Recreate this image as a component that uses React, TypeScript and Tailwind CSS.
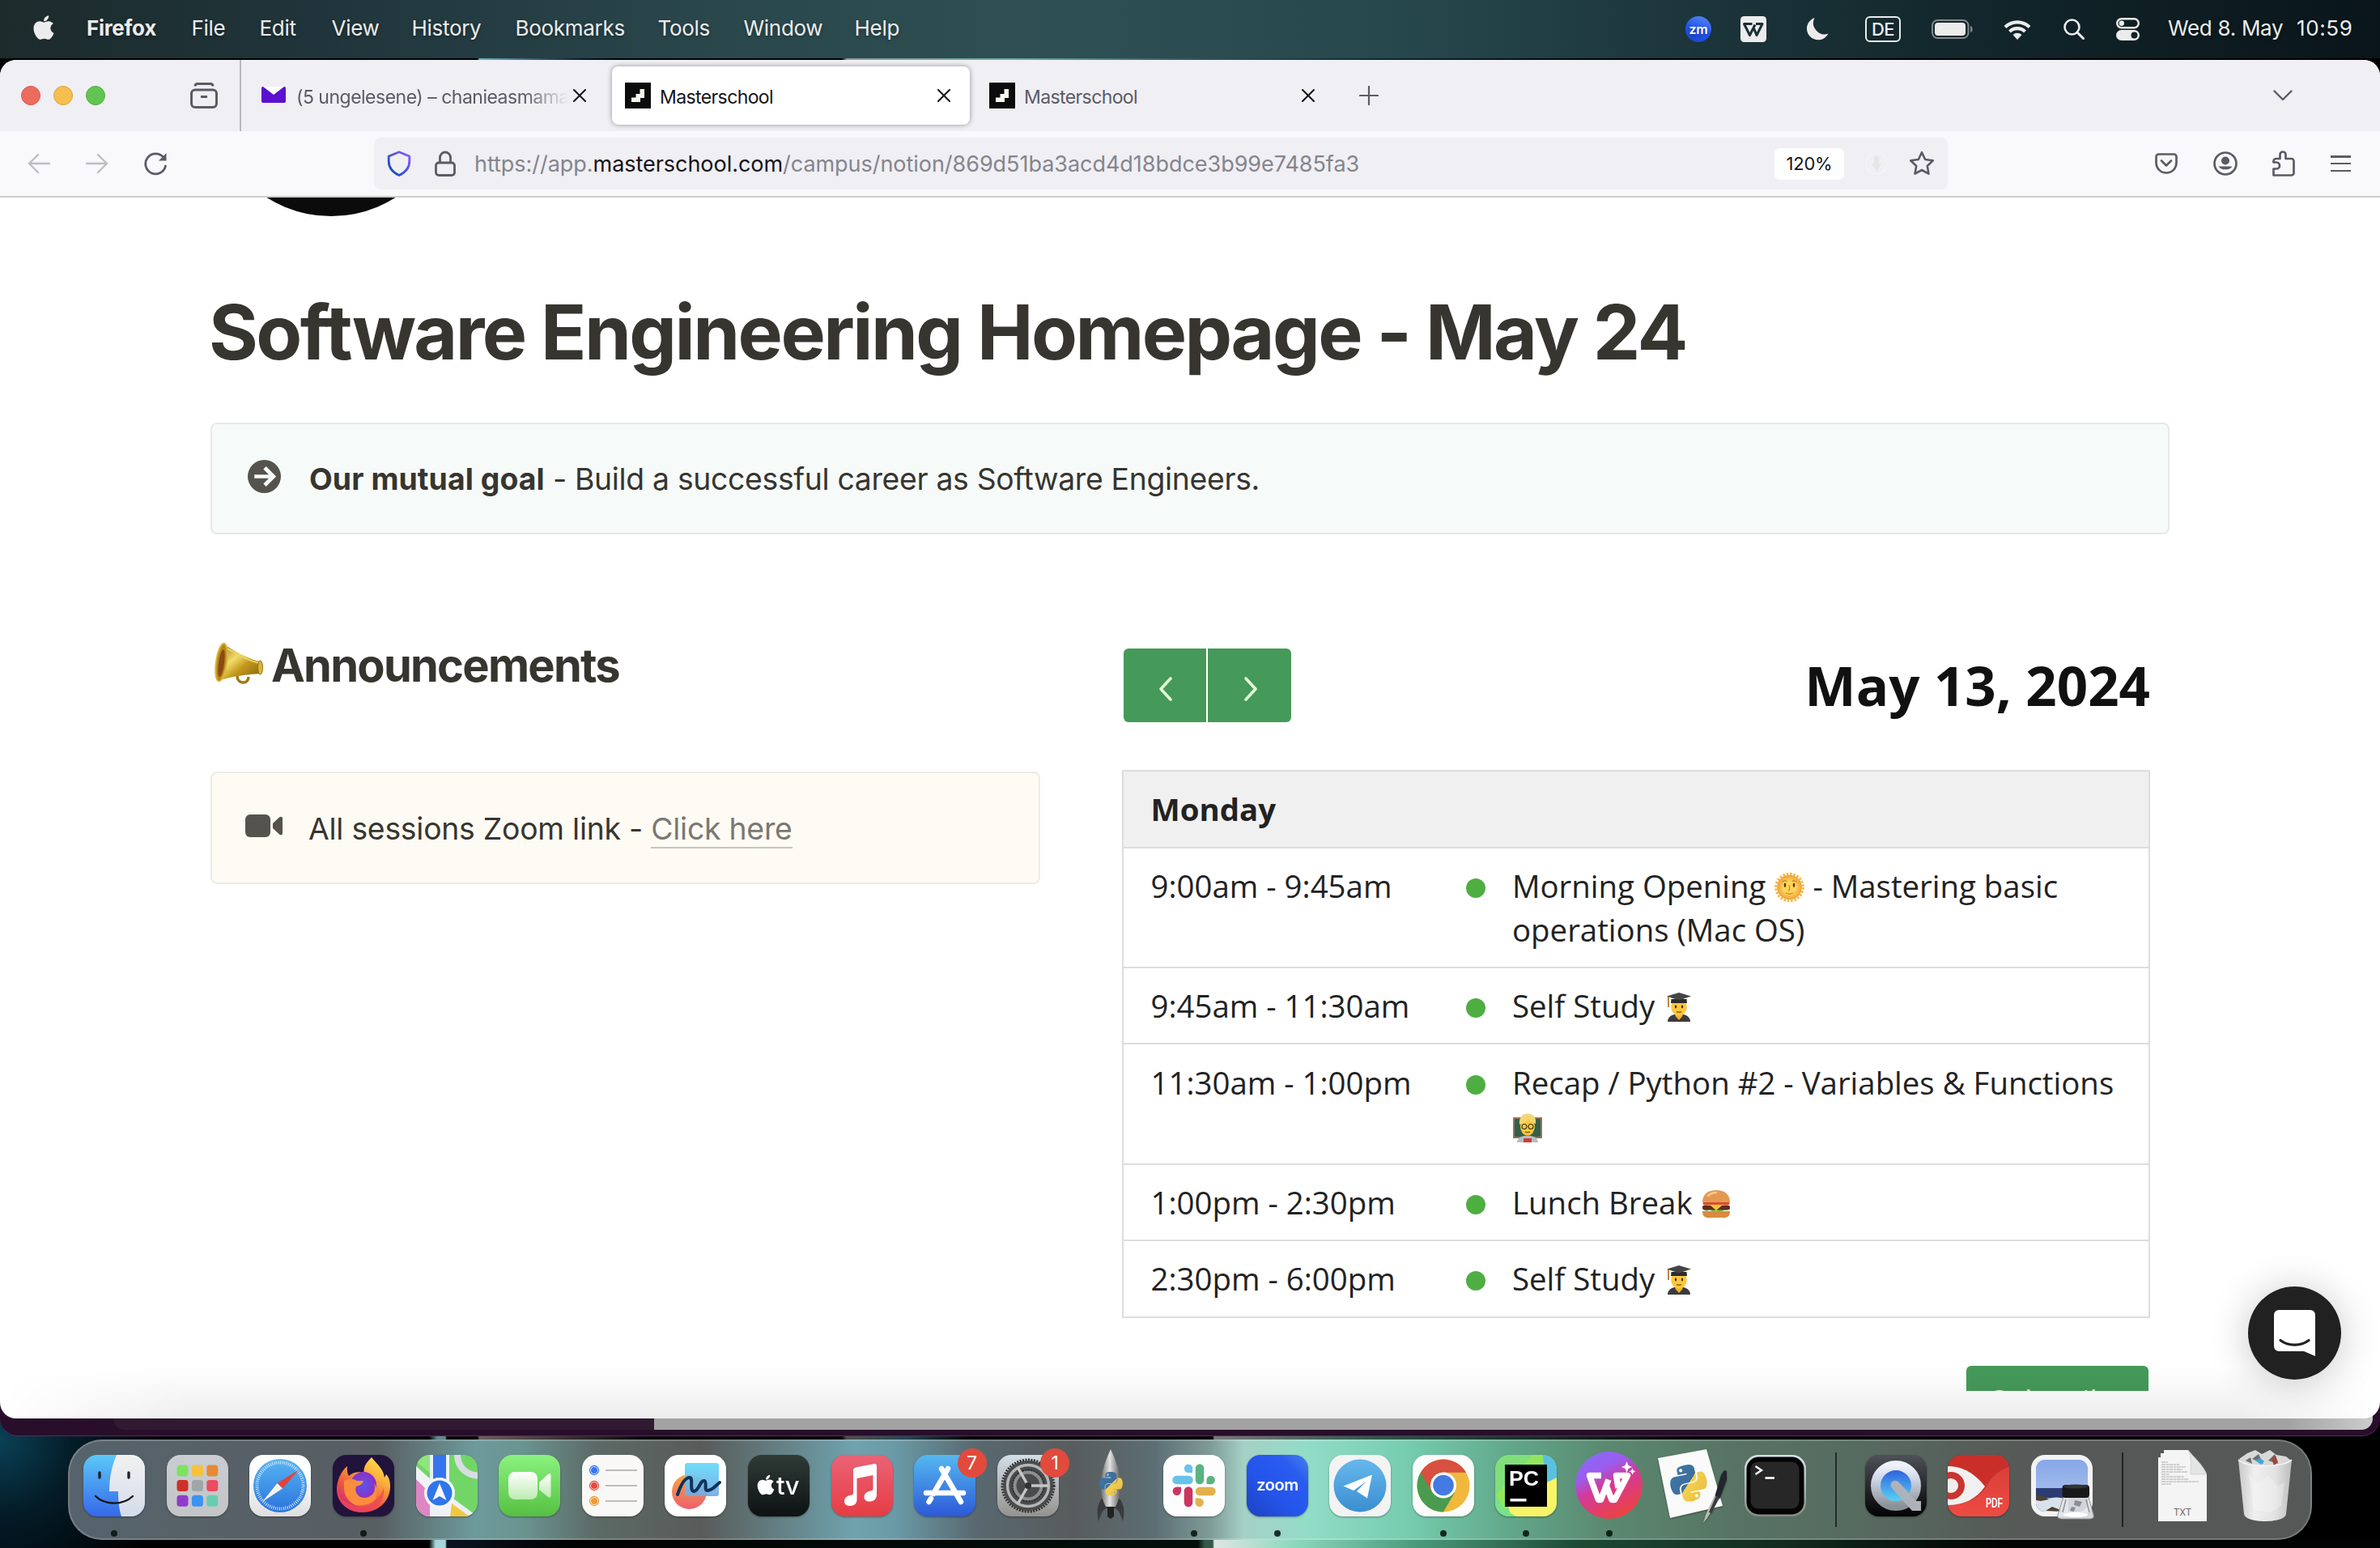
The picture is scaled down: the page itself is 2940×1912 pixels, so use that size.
import React from "react";
import { FaApple, FaPython } from "react-icons/fa";

/* ---------- shared gradients ---------- */
function Defs() {
  return (
    <svg width="0" height="0" className="absolute">
      <defs>
        <linearGradient id="py" x1="0" y1="0" x2="1" y2="1">
          <stop offset="0" stopColor="#3d76a8" />
          <stop offset=".5" stopColor="#3d6f9e" />
          <stop offset=".5" stopColor="#f4d04e" />
          <stop offset="1" stopColor="#e8b93c" />
        </linearGradient>
        <linearGradient id="finder" x1="0" y1="0" x2="0" y2="1">
          <stop offset="0" stopColor="#5cc8f8" />
          <stop offset="1" stopColor="#3568ea" />
        </linearGradient>
        <linearGradient id="finderR" x1="0" y1="0" x2="0" y2="1">
          <stop offset="0" stopColor="#f2f1f1" />
          <stop offset="1" stopColor="#d3dceb" />
        </linearGradient>
        <linearGradient id="ltgray" x1="0" y1="0" x2="0" y2="1">
          <stop offset="0" stopColor="#c9cdd2" />
          <stop offset="1" stopColor="#c3c5c6" />
        </linearGradient>
        <linearGradient id="whiteg" x1="0" y1="0" x2="0" y2="1">
          <stop offset=".3" stopColor="#ffffff" />
          <stop offset="1" stopColor="#dedede" />
        </linearGradient>
        <linearGradient id="compass" x1="0" y1="0" x2="0" y2="1">
          <stop offset="0" stopColor="#57b4f4" />
          <stop offset="1" stopColor="#2a74dc" />
        </linearGradient>
        <linearGradient id="ffbody" x1=".9" y1="0" x2=".3" y2="1">
          <stop offset="0" stopColor="#fdec50" />
          <stop offset=".35" stopColor="#fbae3c" />
          <stop offset=".7" stopColor="#f05440" />
          <stop offset="1" stopColor="#cf2a78" />
        </linearGradient>
        <radialGradient id="fforb">
          <stop offset="0" stopColor="#5b57e8" />
          <stop offset="1" stopColor="#8a2fc8" />
        </radialGradient>
        <linearGradient id="ftime" x1="0" y1="0" x2="0" y2="1">
          <stop offset="0" stopColor="#8af27e" />
          <stop offset="1" stopColor="#56c043" />
        </linearGradient>
        <linearGradient id="cam" x1="0" y1="0" x2="0" y2="1">
          <stop offset="0" stopColor="#ffffff" />
          <stop offset="1" stopColor="#bcebb2" />
        </linearGradient>
        <linearGradient id="ffo" x1="0" y1="0" x2="0" y2="1">
          <stop offset="0" stopColor="#f5a53b" />
          <stop offset="1" stopColor="#ee5f6e" />
        </linearGradient>
        <linearGradient id="ffb" x1="0" y1="0" x2="0" y2="1">
          <stop offset="0" stopColor="#62daf8" />
          <stop offset="1" stopColor="#73a9e4" />
        </linearGradient>
        <linearGradient id="tv" x1="0" y1="0" x2="0" y2="1">
          <stop offset="0" stopColor="#2f3b37" />
          <stop offset="1" stopColor="#0d1213" />
        </linearGradient>
        <linearGradient id="music" x1="0" y1="0" x2="0" y2="1">
          <stop offset="0" stopColor="#ea6376" />
          <stop offset="1" stopColor="#e63c44" />
        </linearGradient>
        <linearGradient id="store" x1="0" y1="0" x2="0" y2="1">
          <stop offset="0" stopColor="#55b8f0" />
          <stop offset="1" stopColor="#2c59d8" />
        </linearGradient>
        <linearGradient id="sett" x1="0" y1="0" x2="0" y2="1">
          <stop offset="0" stopColor="#d3dee6" />
          <stop offset="1" stopColor="#95928f" />
        </linearGradient>
        <linearGradient id="rocket" x1="0" y1="0" x2="1" y2="0">
          <stop offset="0" stopColor="#6d6d6d" />
          <stop offset=".45" stopColor="#e4e4e4" />
          <stop offset="1" stopColor="#5c5c5c" />
        </linearGradient>
        <linearGradient id="zoom" x1="1" y1="0" x2="0" y2="1">
          <stop offset="0" stopColor="#4a80e8" />
          <stop offset=".25" stopColor="#2a5cf0" />
          <stop offset=".6" stopColor="#2454ea" />
          <stop offset="1" stopColor="#1c42c0" />
        </linearGradient>
        <linearGradient id="tele" x1="0" y1="0" x2="0" y2="1">
          <stop offset="0" stopColor="#66b8ec" />
          <stop offset="1" stopColor="#3a8ed0" />
        </linearGradient>
        <linearGradient id="wps" x1=".2" y1="0" x2=".7" y2="1">
          <stop offset="0" stopColor="#8a6bfa" />
          <stop offset=".28" stopColor="#9a5cee" />
          <stop offset=".5" stopColor="#d23a9a" />
          <stop offset="1" stopColor="#f0423a" />
        </linearGradient>
        <linearGradient id="term" x1="0" y1="0" x2="0" y2="1">
          <stop offset="0" stopColor="#d3e2ea" />
          <stop offset="1" stopColor="#8a8684" />
        </linearGradient>
        <linearGradient id="qt" x1="0" y1="0" x2="0" y2="1">
          <stop offset="0" stopColor="#4e5158" />
          <stop offset="1" stopColor="#030303" />
        </linearGradient>
        <linearGradient id="qring" x1="0" y1="0" x2="0" y2="1">
          <stop offset="0" stopColor="#eef2fc" />
          <stop offset=".35" stopColor="#cdd5e6" />
          <stop offset="1" stopColor="#8b9198" />
        </linearGradient>
        <linearGradient id="qin" x1="0" y1="0" x2="0" y2="1">
          <stop offset="0" stopColor="#2a50d8" />
          <stop offset="1" stopColor="#5ee4fa" />
        </linearGradient>
        <linearGradient id="pdf" x1="0" y1="0" x2="0" y2="1">
          <stop offset="0" stopColor="#d8403a" />
          <stop offset="1" stopColor="#ee4a42" />
        </linearGradient>
        <linearGradient id="sky" x1="0" y1="0" x2="0" y2="1">
          <stop offset="0" stopColor="#86a8e8" />
          <stop offset="1" stopColor="#b3c8ef" />
        </linearGradient>
        <linearGradient id="trash" x1="0" y1="0" x2="1" y2="0">
          <stop offset="0" stopColor="#c9c9c9" />
          <stop offset=".3" stopColor="#efefef" />
          <stop offset=".7" stopColor="#e2e2e2" />
          <stop offset="1" stopColor="#bdbdbd" />
        </linearGradient>
        <linearGradient id="brass" x1="0" y1="0" x2="1" y2="1">
          <stop offset="0" stopColor="#8a6a10" />
          <stop offset=".4" stopColor="#f2dc6a" />
          <stop offset=".6" stopColor="#c49a1e" />
          <stop offset="1" stopColor="#7a5c0c" />
        </linearGradient>
        <linearGradient id="shield" x1="1" y1="0" x2="0" y2="1">
          <stop offset="0" stopColor="#9059ff" />
          <stop offset="1" stopColor="#0250bb" />
        </linearGradient>
        <radialGradient id="sun">
          <stop offset=".5" stopColor="#fdd458" />
          <stop offset="1" stopColor="#ee9f3c" />
        </radialGradient>
        <clipPath id="tile">
          <rect width="76" height="76" rx="17" />
        </clipPath>
      </defs>
    </svg>
  );
}

function Tile({ fill, children }: { fill: string; children?: React.ReactNode }) {
  return (
    <svg viewBox="0 0 76 76" className="size-[76px] overflow-visible drop-shadow-[0_1px_1px_rgba(0,0,0,0.35)]">
      <g clipPath="url(#tile)">
        <rect width="76" height="76" fill={fill} />
        {children}
      </g>
    </svg>
  );
}

/* ---------- dock icons ---------- */
const Finder = () => (
  <Tile fill="url(#finder)">
    <path d="M41 0C35 14 32 28 32 45h11c0 12 1 22 4 31h29V0z" fill="url(#finderR)" />
    <path d="M20 22v6M56 22v6" stroke="#222" strokeWidth="3.400" strokeLinecap="round" />
    <path d="M15 51c12 11.500 34 11.500 46 0" stroke="#151515" strokeWidth="2.400" fill="none" strokeLinecap="round" />
  </Tile>
);
const padColors = ["#7de35e", "#f6c23d", "#e68a35", "#cc3128", "#a0a5a8", "#ea4c60", "#8f3ccb", "#3c93f2", "#6accae"];
const Launchpad = () => (
  <Tile fill="url(#ltgray)">
    {padColors.map((c, i) => (
      <rect key={c} x={12.5 + (i % 3) * 18.4} y={12.5 + Math.floor(i / 3) * 18.6} width="14" height="14" rx="3.500" fill={c} />
    ))}
  </Tile>
);
const Safari = () => (
  <Tile fill="url(#whiteg)">
    <circle cx="38" cy="38" r="33" fill="url(#compass)" />
    <circle cx="38" cy="38" r="28.500" fill="none" stroke="#fff" strokeWidth="4" strokeDasharray="0.900 1.587" opacity=".85" />
    <path d="M61.500 18L41 41.500 34.500 35z" fill="#e0443c" />
    <path d="M16 58l18.500-23 6.500 6.500z" fill="#f6f4f2" />
  </Tile>
);
const FirefoxIcon = () => (
  <Tile fill="#21133b">
    <path d="M48 3c-6 6-10 11-9.500 19C31 20 24 22 20 26c-2-3-2.500-7-2-12-8 6-13 18-13 29 0 16 14 28 32 28s34-13 34-32c0-8-2-12-5-15l-2 4C62 16 55 12 48 3z" fill="url(#ffbody)" />
    <circle cx="38" cy="37" r="16" fill="url(#fforb)" />
    <path d="M14 32c5-3 12-3 16 0l8 0c-1 4-5 6-9 7-3 8 4 15 12 14 9-1 13-9 10-18 6 8 5 22-6 27-15 6-30-5-31-20z" fill="#fb8d3c" />
    <path d="M6 48c7 12 22 17 36 13 11-3 18-11 21-20 2 16-10 30-27 30C21 71 9 62 6 48z" fill="#ee4a55" opacity=".75" />
  </Tile>
);
const Maps = () => (
  <Tile fill="#72d667">
    <path d="M0 0h26v30L0 8z" fill="#8fe57c" />
    <path d="M0 20l76 56H40L0 46z" fill="#eceef2" />
    <path d="M0 14l56 50-8 12H0z" fill="#f1f2f6" />
    <path d="M0 30l18 18v28H0z" fill="#dd86c4" />
    <path d="M44 60l22 16H42z" fill="#f2c83f" />
    <path d="M17 0h24v76H17z" fill="#eef0f5" />
    <path d="M21 0h16v40H21z" fill="#3574ee" />
    <path d="M51 0c0 14 10 25 27 26" stroke="#d9dde2" strokeWidth="8" fill="none" />
    <circle cx="29" cy="47" r="19" fill="#f3f5f8" />
    <circle cx="29" cy="47" r="15.500" fill="#2f76ea" />
    <path d="M29 35l8.500 21-8.500-5-8.500 5z" fill="#f6f6f6" />
  </Tile>
);
const FaceTime = () => (
  <Tile fill="url(#ftime)">
    <rect x="12" y="21" width="36" height="34" rx="8" fill="url(#cam)" />
    <path d="M50 34l11-10c2-1.500 3.500-.5 3.500 1.500v25c0 2-1.500 3-3.500 1.500l-11-9z" fill="url(#cam)" />
  </Tile>
);
const Reminders = () => (
  <Tile fill="#f9f8f7">
    {["#3576ec", "#e64a40", "#ee9a38"].map((c, i) => (
      <g key={c}>
        <circle cx="15" cy={19 + i * 19} r="5.500" fill="none" stroke={c} strokeWidth="1.300" />
        <circle cx="15" cy={19 + i * 19} r="4" fill={c} />
        <path d={`M29 ${19 + i * 19}h39`} stroke="#bdbcbc" strokeWidth="1.800" />
      </g>
    ))}
  </Tile>
);
const Freeform = () => (
  <Tile fill="#ffffff">
    <circle cx="30.500" cy="45.500" r="21.500" fill="url(#ffo)" />
    <rect x="25" y="10" width="42" height="41" rx="3" fill="url(#ffb)" opacity=".92" />
    <path d="M16 49c4-12 9-21 15-21 5 0-1 16 5 17 6 0 8-14 13-13 4 1-1 12 4 12 6 0 10-6 15-10" stroke="#10325c" strokeWidth="4" fill="none" strokeLinecap="round" />
  </Tile>
);
const AppleTV = () => (
  <Tile fill="url(#tv)">
    <FaApple x={8} y={23} size={28} fill="#fff" />
    <text x="35" y="49" fontFamily="Inter" fontSize="31" fontWeight="500" letterSpacing="-.5" fill="#fff">tv</text>
  </Tile>
);
const Music = () => (
  <Tile fill="url(#music)">
    <path d="M27 20c0-3 1-4 4-4.800l21-4c3-.6 4 .5 4 3.300V49c0 5-3 8-8 8.500-4 .4-7.500-1.500-7.500-5.500 0-5 4-6.800 8-7.600 2.500-.5 3-1 3-3V25l-20 4v26c0 5-3 7.800-8 8-4.500.2-7.500-2-7.500-5.500 0-5 4-7 8-7.700 2.500-.5 3-1 3-3z" fill="#fff" />
  </Tile>
);
const AppStore = () => (
  <Tile fill="url(#store)">
    <g stroke="#fff" strokeWidth="6.500" strokeLinecap="round">
      <path d="M42 17L24 48M34 17l24 41M15 47h46M21 54l-2.500 4" />
    </g>
  </Tile>
);
const Settings = () => (
  <Tile fill="url(#sett)">
    <circle cx="38" cy="38" r="31" fill="#4a4b4d" />
    <circle cx="38" cy="38" r="32" fill="none" stroke="#2e2f31" strokeWidth="3" strokeDasharray="2 1.500" />
    <circle cx="38" cy="38" r="25.500" fill="none" stroke="#b5b6b8" strokeWidth="3.500" />
    <circle cx="38" cy="38" r="16.500" fill="none" stroke="#8d8e90" strokeWidth="4" />
    <circle cx="38" cy="38" r="19.500" fill="none" stroke="#2e2f31" strokeWidth="2" strokeDasharray="2 1.500" />
    <path d="M38 38h25M38 38L25.500 16M38 38L25.500 60" stroke="#c5c6c8" strokeWidth="3.500" />
    <circle cx="38" cy="38" r="4" fill="#303133" />
  </Tile>
);
const Rocket = () => (
  <svg viewBox="0 0 40 92" className="h-[92px] w-[40px]">
    <path d="M9 62C4 68 2 78 5 90c3-8 4-13 9-16h12c5 3 6 8 9 16 3-12 1-22-4-28z" fill="#3b3b3d" />
    <path d="M20 1C11 20 7 36 8 50c.500 10 3 16 6 22h12c3-6 5.500-12 6-22 1-14-3-30-12-49z" fill="url(#rocket)" />
    <path d="M16 72h8v12l-4 3-4-3z" fill="#222" />
    <FaPython x={4} y={27} size={33} fill="url(#py)" />
  </svg>
);
const SlackIcon = () => (
  <Tile fill="#fdfdfd">
    <g strokeLinecap="round" strokeWidth="10.500">
      <path d="M45 16.500v14.500" stroke="#5bb384" />
      <path d="M16.500 31h15" stroke="#68c3ec" />
      <path d="M31 44.500V59" stroke="#cc3560" />
      <path d="M45 45h14.500" stroke="#e2b24a" />
    </g>
    <path d="M36 22h-5a5.200 5.200 0 1 1 5.200-5.200z" fill="#68c3ec" />
    <path d="M53.500 36v-5a5.200 5.200 0 1 1 5.200 5.200z" fill="#5bb384" />
    <path d="M39.700 53.500h5a5.200 5.200 0 1 1-5.200 5.200z" fill="#e2b24a" />
    <path d="M22 39.700v5a5.200 5.200 0 1 1-5.200-5.200z" fill="#cc3560" />
  </Tile>
);
const ZoomIcon = () => (
  <Tile fill="url(#zoom)">
    <text x="38" y="43.500" textAnchor="middle" fontFamily="Inter" fontSize="20" fontWeight="600" letterSpacing="-.5" fill="#fff">zoom</text>
  </Tile>
);
const TelegramIcon = () => (
  <Tile fill="#f3f3f3">
    <circle cx="38" cy="38" r="32.500" fill="url(#tele)" />
    <path d="M17.500 38.500L53 24.500l-6 29-13-8.500 12-12.500-16 11.500z" fill="#fff" />
  </Tile>
);
const ChromeIcon = () => (
  <Tile fill="#fbfcfb">
    <circle cx="38" cy="38" r="32.500" fill="#f2b83e" />
    <path d="M38 38L9.900 21.700A32.500 32.500 0 0 0 38 70.500l14-24z" fill="#4a9b50" />
    <path d="M9.900 21.700A32.500 32.500 0 0 1 66.100 21.700H38L24 46z" fill="#d8503f" />
    <circle cx="38" cy="37.500" r="16" fill="#fff" />
    <circle cx="38" cy="37.500" r="12.800" fill="#447be2" />
  </Tile>
);
const PyCharm = () => (
  <Tile fill="#7fe07a">
    <path d="M59 0h17v30L62 34z" fill="#5ac0e0" />
    <path d="M0 50L46 0h12l6 40H30L6 76H0z" fill="#92e65e" />
    <path d="M76 28v48H20l-4-12 48-30z" fill="#f8f468" />
    <path d="M0 48l12 20 14 8H0z" fill="#79e28a" />
    <rect x="12" y="12" width="52" height="52" fill="#000" />
    <rect x="18.500" y="54" width="20" height="3.500" fill="#fff" />
    <text x="17" y="37.500" fontFamily="Liberation Sans" fontWeight="700" fontSize="26" textLength="37" lengthAdjust="spacingAndGlyphs" fill="#fff">PC</text>
  </Tile>
);
const Wps = () => (
  <svg viewBox="0 0 83 83" className="size-[83px]">
    <circle cx="41.500" cy="41.500" r="41.500" fill="url(#wps)" />
    <path d="M32 29.500H17.500L28.500 59.500h3L41 34.500M37.500 40L45 59.500h3.500L64.500 29.500H50.500L53 45" fill="none" stroke="#fff" strokeWidth="7.500" strokeLinejoin="round" />
    <path d="M63.500 12l2 5 4.500 2-4.500 2-2 5-2-5-4.500-2 4.500-2zM70.500 20.500l1.300 2.800 2.700 1.200-2.700 1.200L70.500 28.500l-1.300-2.800-2.700-1.200 2.700-1.200z" fill="#fff" />
  </svg>
);
const Idle = () => (
  <svg viewBox="0 0 86 92" className="h-[92px] w-[86px] overflow-visible drop-shadow-[0_1px_1px_rgba(0,0,0,0.4)]">
    <path d="M0 12L60 1l20 70L15 86z" fill="#fafafa" />
    <g transform="rotate(-12 38 43)">
      <FaPython x={12} y={17} size={52} fill="url(#py)" />
    </g>
    <path d="M85 28l-3-1-4 6-8 27 6 3 9-24z" fill="#23262e" />
    <path d="M70 58l-11 24-3 10 5-6 15-24z" fill="#b9bbb0" />
    <path d="M72 58l-9 21 3 1 10-19z" fill="#3a3d42" />
  </svg>
);
const Terminal = () => (
  <svg viewBox="0 0 76 76" className="size-[76px]">
    <rect width="76" height="76" rx="17" fill="url(#term)" />
    <rect x="2.500" y="2.500" width="71" height="71" rx="15" fill="#040404" />
    <rect x="7.500" y="8.500" width="60" height="58" rx="9" fill="#272727" />
    <path d="M13.500 14l7.500 5-7.500 5" fill="none" stroke="#fff" strokeWidth="2.400" />
    <path d="M25.500 28.500H37" stroke="#fff" strokeWidth="2.600" />
  </svg>
);
const QuickTime = () => (
  <Tile fill="url(#qt)">
    <circle cx="38" cy="38" r="25" fill="url(#qin)" stroke="url(#qring)" strokeWidth="12" />
    <path d="M33 41c-5-6 3-13 9-7l21 23h6v12H58z" fill="#aeb3ba" />
  </Tile>
);
const PdfIcon = () => (
  <Tile fill="#c92f28">
    <path d="M76 15C60 20 54 28 47 40 38 54 20 62 0 62v14h76z" fill="url(#pdf)" />
    <path d="M0 14c20 0 34 10 46 25C36 54 20 62 0 62z" fill="#f1f0f0" />
    <circle cx="4" cy="38" r="17" fill="#c8352f" />
    <circle cx="4" cy="38" r="9" fill="#f3eeee" />
    <text x="47" y="65" fontFamily="Liberation Sans" fontWeight="700" fontSize="16.500" textLength="21" lengthAdjust="spacingAndGlyphs" fill="#fff">PDF</text>
  </Tile>
);
const PreviewIcon = () => (
  <svg viewBox="0 0 78 80" className="ml-[2px] mt-[4px] h-[80px] w-[78px] overflow-visible">
    <rect width="76" height="76" rx="17" fill="#f3f3f3" />
    <rect x="6" y="6" width="64" height="64" rx="11" fill="url(#sky)" />
    <path d="M6 41h64v18a11 11 0 0 1-11 11H17A11 11 0 0 1 6 59z" fill="#2c3d74" />
    <path d="M6 53c8-3 14 2 20 0 8-2 14 2 20 0v17H17A11 11 0 0 1 6 59z" fill="#d9e2ea" />
    <path d="M6 49l10 2 6 4-10 2-6-1zM18 69l8-5 8 3 6 3z" fill="#4d4136" />
    <path d="M40 52L33 74c-1 4 2 5 6 5h32c5 0 7-1 6-5l-6-22z" fill="#e4e6e8" fillOpacity=".9" stroke="#8e9297" />
    <path d="M43 55l-4 16M68 55l4 16" stroke="#90959a" strokeWidth="1.500" />
    <path d="M54 56l9 2-3 6-7-2zM50 64l5 1-2 5-5-1z" fill="#8a8f96" />
    <ellipse cx="55" cy="74" rx="15" ry="3" fill="#fff" />
    <rect x="38.500" y="37" width="33.500" height="16" rx="4" fill="#19191a" />
    <ellipse cx="55" cy="39" rx="15" ry="2.500" fill="#333435" />
  </svg>
);
const TxtFile = () => (
  <svg viewBox="0 0 60 90" className="h-[90px] w-[60px]">
    <path d="M7 1h30l23 30v58H0V10h3V5h4z" fill="#f4f4f4" />
    <path d="M37 1c5 8 3 20 3 30h20C56 20 44 10 37 1z" fill="#e4e4e4" stroke="#c2c2c2" strokeWidth=".6" />
    <path d="M4 16h8M4 19h22M4 22h30M4 25h26M4 28h32M4 31h10M4 34h28M4 37h34M4 40h46M4 43h12" stroke="#a0a0a0" strokeWidth=".9" strokeDasharray="5 .8 3 .6" />
    <text x="30" y="82" textAnchor="middle" fontFamily="Inter" fontSize="11.500" fill="#6b6b6b">TXT</text>
  </svg>
);
const Trash = () => (
  <svg viewBox="0 0 68 90" className="h-[90px] w-[68px]">
    <path d="M2 12l10-7 10-4 8 5 10-5 8 6 12 2 6 5-8 10-24 4-24-5z" fill="#d9d9d9" />
    <path d="M18 12l8-6 6 12zM38 14l8-8 4 12zM10 14l6-4 2 8z" fill="#6b6f74" />
    <path d="M22 14l6-3 5 4-4 4z" fill="#3ba7d8" />
    <path d="M42 11l5-3 3 8-5 4z" fill="#a0453a" />
    <path d="M1 13c8 10 58 10 66 0l-7 67c-1 12-51 12-52 0z" fill="url(#trash)" />
    <path d="M14 30l10 12 14-10 12 14 8-6-4 30-14 8-20-2z" fill="#fff" opacity=".25" />
    <path d="M1 13c8 10 58 10 66 0" fill="none" stroke="#f6f6f6" strokeWidth="1.500" />
  </svg>
);

type DockItem = { name: string; icon: React.ReactNode; running?: boolean; badge?: string };
const apps: DockItem[] = [
  { name: "Finder", icon: <Finder />, running: true },
  { name: "Launchpad", icon: <Launchpad /> },
  { name: "Safari", icon: <Safari /> },
  { name: "Firefox", icon: <FirefoxIcon />, running: true },
  { name: "Maps", icon: <Maps /> },
  { name: "FaceTime", icon: <FaceTime /> },
  { name: "Reminders", icon: <Reminders /> },
  { name: "Freeform", icon: <Freeform /> },
  { name: "TV", icon: <AppleTV /> },
  { name: "Music", icon: <Music /> },
  { name: "App Store", icon: <AppStore />, badge: "7" },
  { name: "Settings", icon: <Settings />, badge: "1" },
  { name: "Python Launcher", icon: <Rocket /> },
  { name: "Slack", icon: <SlackIcon />, running: true },
  { name: "Zoom", icon: <ZoomIcon />, running: true },
  { name: "Telegram", icon: <TelegramIcon /> },
  { name: "Chrome", icon: <ChromeIcon />, running: true },
  { name: "PyCharm", icon: <PyCharm />, running: true },
  { name: "WPS", icon: <Wps />, running: true },
  { name: "IDLE", icon: <Idle /> },
  { name: "Terminal", icon: <Terminal /> },
];
const recents: DockItem[] = [
  { name: "QuickTime", icon: <QuickTime /> },
  { name: "PDF", icon: <PdfIcon /> },
  { name: "Preview", icon: <PreviewIcon /> },
];
const files: DockItem[] = [
  { name: "Text", icon: <TxtFile /> },
  { name: "Trash", icon: <Trash /> },
];

function DockSlot({ item }: { item: DockItem }) {
  return (
    <div className="relative flex h-full w-[102.600px] shrink-0 items-center justify-center pb-[11px]" title={item.name}>
      {item.icon}
      {item.badge && (
        <span className="absolute right-0 top-[9px] flex size-[36px] items-center justify-center rounded-full bg-[#e04b3d] font-['Inter'] text-[23px] text-white">
          {item.badge}
        </span>
      )}
      {item.running && <span className="absolute bottom-[2px] size-[8px] rounded-full bg-[#04100c]/85" />}
    </div>
  );
}

const Sep = () => (
  <div className="flex h-full w-[46px] shrink-0 justify-center pl-[1px]">
    <div className="mt-[14px] h-[92px] w-[2px] bg-black/60" />
  </div>
);

function Dock() {
  return (
    <div className="relative ml-[84px] mt-[26px] flex h-[124px] w-[2772px] rounded-[42px] border-2 border-white/20 bg-[linear-gradient(90deg,#56636c_0px,#585e62_380px,#6d9a9b_500px,#6a9490_560px,#5c6a66_650px,#585b59_780px,#6fa3ae_970px,#6a9aa6_1020px,#586870_1120px,#585c5c_1240px,#5c6e74_1340px,#7f9c98_1410px,#a5d0c6_1450px,#92dcc6_1530px,#76cdb0_1650px,#62a78a_1780px,#5a8870_1900px,#577363_2060px,#566a60_2220px,#565c58_2370px,#565857_2450px)] pl-[4px]">
      {apps.map((a) => (
        <DockSlot key={a.name} item={a} />
      ))}
      <Sep />
      {recents.map((a) => (
        <DockSlot key={a.name} item={a} />
      ))}
      <Sep />
      {files.map((a) => (
        <DockSlot key={a.name} item={a} />
      ))}
    </div>
  );
}

/* ---------- menu bar ---------- */
function MenuBar() {
  return (
    <div className="relative flex h-[72px] items-center bg-[linear-gradient(90deg,#1c2b2c_0px,#20353b_400px,#2a484c_900px,#2e4f53_1300px,#27494e_1700px,#1c363b_2080px,#12262b_2440px,#09151a_2940px)] font-['Inter'] text-[26px] tracking-[-0.3px] text-[#ececec] [text-shadow:0_2px_4px_rgba(0,0,0,0.35)]">
      <div className="-mt-[3px] flex items-center">
        <div className="w-[107px] pl-[37px]">
          <FaApple size={34} className="-mt-[2px]" />
        </div>
        <div className="w-[129.500px] font-bold">Firefox</div>
        <div className="w-[84px]">File</div>
        <div className="w-[89px]">Edit</div>
        <div className="w-[99px]">View</div>
        <div className="w-[128px]">History</div>
        <div className="w-[176px]">Bookmarks</div>
        <div className="w-[106px]">Tools</div>
        <div className="w-[137px]">Window</div>
        <div className="w-[90px]">Help</div>
      </div>
      <div className="ml-auto flex items-center pr-[33px]">
        <div className="flex size-[32px] items-center justify-center rounded-full bg-[linear-gradient(200deg,#5b8cf4,#2456ee_50%,#1c45c8)] text-[16px] font-semibold tracking-[-0.3px] text-white">zm</div>
        <svg viewBox="0 0 32 32" className="ml-[36px] size-[32px]">
          <rect width="32" height="32" rx="4.500" fill="#ececec" />
          <path d="M14.500 9.500H4.500L11.500 23.500l6.500-13M16.500 15L20 23.500 27 9.500H19" fill="none" stroke="#1a3035" strokeWidth="3" strokeLinejoin="round" />
        </svg>
        <svg viewBox="0 0 28 28" className="ml-[49px] size-[28px]">
          <path d="M10.500 0A14 14 0 0 0 27.500 19.500 14 14 0 1 1 10.500 0z" fill="#ececec" />
        </svg>
        <div className="ml-[45px] flex h-[32px] w-[44px] items-center justify-center rounded-[6px] border-[2px] border-[#ececec] text-[22px] font-medium tracking-[-0.5px]">DE</div>
        <svg viewBox="0 0 52 24" className="ml-[38px] h-[24px] w-[52px]">
          <rect x="1" y="1" width="44.500" height="22" rx="6.500" fill="none" stroke="#ececec" strokeOpacity=".5" strokeWidth="2" />
          <rect x="4" y="4" width="38" height="16" rx="4" fill="#ececec" />
          <path d="M48 8c3.500 1 3.500 7 0 8z" fill="#ececec" fillOpacity=".5" />
        </svg>
        <svg viewBox="0 0 34 25" className="ml-[37px] h-[25px] w-[34px]">
          <path d="M2 9.500a21.500 21.500 0 0 1 30 0M7.500 15a13.800 13.800 0 0 1 19 0" fill="none" stroke="#ececec" strokeWidth="4.200" />
          <path d="M11.500 19a8 8 0 0 1 11 0L17 25z" fill="#ececec" />
        </svg>
        <svg viewBox="0 0 26 26" className="ml-[40px] size-[26px]">
          <circle cx="10.500" cy="10.500" r="9" fill="none" stroke="#ececec" strokeWidth="2.600" />
          <path d="M17 17l7.500 7.500" stroke="#ececec" strokeWidth="3" strokeLinecap="round" />
        </svg>
        <svg viewBox="0 0 29 28" className="ml-[39px] h-[28px] w-[29px]">
          <rect x="1.200" y="1.200" width="26.600" height="11" rx="5.500" fill="none" stroke="#ececec" strokeWidth="2.400" />
          <circle cx="6.800" cy="6.700" r="3.200" fill="#ececec" />
          <rect y="15" width="29" height="13" rx="6.500" fill="#ececec" />
          <circle cx="22.500" cy="21.500" r="4" fill="#10242a" />
        </svg>
        <div className="-mt-[3px] ml-[35px] w-[159px] whitespace-nowrap">Wed 8. May</div>
        <div className="-mt-[3px] w-[70px] whitespace-nowrap tracking-[0.6px]">10:59</div>
      </div>
    </div>
  );
}

/* ---------- browser chrome ---------- */
const Close = ({ className }: { className: string }) => (
  <svg viewBox="0 0 16 16" className={className}>
    <path d="M1 1l14 14M15 1L1 15" stroke="#15141a" strokeWidth="2" strokeLinecap="round" />
  </svg>
);
const Steps = () => (
  <svg viewBox="0 0 32 32" className="size-[32px] shrink-0">
    <rect width="32" height="32" fill="#0c0c0c" />
    <path d="M18.500 8H24v11h-5v5H8v-5.500h5.500V14h5z" fill="#f7f7f0" />
  </svg>
);

function TabStrip() {
  return (
    <div className="flex h-[88px] items-center bg-[#f0eff4] font-['Inter'] text-[23px] tracking-[-0.600px] text-[#5b5b66]">
      <div className="flex h-full w-[296px] items-center pl-[26px]">
        <div className="size-[24px] rounded-full border border-[#d95a4f] bg-[#ed6a5e]" />
        <div className="ml-[16px] size-[24px] rounded-full border border-[#dda23c] bg-[#f4bf4f]" />
        <div className="ml-[16px] size-[24px] rounded-full border border-[#50ad3f] bg-[#61c554]" />
        <svg viewBox="0 0 34 32" className="ml-[105px] h-[32px] w-[34px]">
          <rect x="1.500" y="9" width="31" height="21.500" rx="4.500" fill="none" stroke="#5b5b66" strokeWidth="3" />
          <path d="M6 4.500C6 2.500 7 1.500 9 1.500h16c2 0 3 1 3 3" fill="none" stroke="#5b5b66" strokeWidth="3" />
          <rect x="13" y="16" width="8" height="3" fill="#5b5b66" />
        </svg>
      </div>
      <div className="h-full w-[2px] bg-[#b9b8bf]" />
      <div className="flex w-[458px] items-center pl-[25px]">
        <svg viewBox="0 0 30 20" className="mt-[-2px] h-[20px] w-[30px] shrink-0">
          <rect width="30" height="20" rx="2" fill="#5c10d0" />
          <path d="M2 0h26L15 10z" fill="#fff" />
        </svg>
        <div className="ml-[13px] w-[336px] shrink-0 overflow-hidden whitespace-nowrap pt-[4px] tracking-[-0.500px] [mask-image:linear-gradient(90deg,#000_84%,transparent_100%)]">
          (5 ungelesene) – chanieasmama
        </div>
        <Close className="ml-[6px] size-[16px] shrink-0" />
      </div>
      <div className="flex h-[72px] w-[442px] items-center rounded-[8px] bg-white pl-[16px] text-[#15141a] shadow-[0_0_6px_rgba(0,0,0,0.4)]">
        <Steps />
        <div className="ml-[11px] w-[343px] pt-[4px]">Masterschool</div>
        <Close className="size-[16px]" />
      </div>
      <div className="flex items-center pl-[24px]">
        <Steps />
        <div className="ml-[11px] w-[343px] pt-[4px]">Masterschool</div>
        <Close className="size-[16px]" />
      </div>
      <svg viewBox="0 0 24 24" className="ml-[55px] size-[24px]">
        <path d="M12 1v22M1 12h22" stroke="#5b5b66" strokeWidth="2.200" strokeLinecap="round" />
      </svg>
      <svg viewBox="0 0 24 14" className="ml-auto mr-[108px] h-[14px] w-[24px]">
        <path d="M1.500 1.500L12 12 22.500 1.500" fill="none" stroke="#5b5b66" strokeWidth="2.400" strokeLinecap="round" strokeLinejoin="round" />
      </svg>
    </div>
  );
}

function Toolbar() {
  return (
    <div className="flex h-[82px] items-center border-b-2 border-[#cccccc] bg-[#f9f9fb]">
      <svg viewBox="0 0 28 26" className="ml-[34px] h-[26px] w-[28px]" fill="none" stroke="#bdbdc3" strokeWidth="2.400" strokeLinecap="round" strokeLinejoin="round">
        <path d="M13 2L2 13l11 11M2 13h25" />
      </svg>
      <svg viewBox="0 0 28 26" className="ml-[44px] h-[26px] w-[28px]" fill="none" stroke="#bdbdc3" strokeWidth="2.400" strokeLinecap="round" strokeLinejoin="round">
        <path d="M15 2l11 11-11 11M26 13H1" />
      </svg>
      <svg viewBox="0 0 30 30" className="ml-[43px] size-[30px]" fill="none" stroke="#5b5b66" strokeWidth="2.800" strokeLinecap="round">
        <path d="M27.500 18A12.500 12.500 0 1 1 25 7.500" />
        <path d="M28.500 2v9.500H19z" fill="#5b5b66" stroke="none" />
      </svg>
      <div className="ml-[255px] flex h-[64px] w-[1944px] shrink-0 items-center rounded-[8px] bg-[#f0eff4]">
        <svg viewBox="0 0 30 32" className="ml-[16px] h-[32px] w-[30px]">
          <path d="M15 1.800L27.800 7v6c0 9-5 14-12.800 17.500C7.200 27 2.200 22 2.200 13V7z" fill="none" stroke="url(#shield)" strokeWidth="2.800" strokeLinejoin="round" />
        </svg>
        <svg viewBox="0 0 26 32" className="ml-[29px] h-[32px] w-[26px]" fill="none" stroke="#5b5b66" strokeWidth="2.800">
          <rect x="1.500" y="15" width="23" height="15.500" rx="3.500" />
          <path d="M6.500 15V8.500a6.500 6.500 0 0 1 13 0V15" />
        </svg>
        <div className="ml-[23px] w-[1606px] whitespace-nowrap pt-[3px] font-['Inter'] text-[27px] tracking-[-0.040px] text-[#85858c]">
          https://app.<span className="text-[#15141a]">masterschool.com</span>/campus/notion/869d51ba3acd4d18bdce3b99e7485fa3
        </div>
        <div className="flex h-[39px] w-[86px] items-center justify-center rounded-[7px] bg-white font-['Inter'] text-[22px] tracking-[-0.200px] text-[#15141a]">120%</div>
        <svg viewBox="0 0 28 28" className="ml-[26px] size-[28px]">
          <circle cx="14" cy="14" r="13" fill="none" stroke="#f6f6f6" strokeWidth="1.200" />
          <path d="M11 5h6v9h3l-6 10-6-10h3z" fill="#e6e6e6" />
        </svg>
        <svg viewBox="0 0 32 32" className="ml-[26px] size-[32px]">
          <path d="M16 2.200l4.200 8.800 9.600 1.300-7 6.700 1.700 9.700L16 24l-8.500 4.700L9.200 19l-7-6.700L11.800 11z" fill="none" stroke="#5b5b66" strokeWidth="2.600" strokeLinejoin="round" />
        </svg>
      </div>
      <svg viewBox="0 0 28 26" className="ml-[256px] h-[26px] w-[28px]" fill="none" stroke="#5b5b66" strokeWidth="2.700" strokeLinecap="round" strokeLinejoin="round">
        <path d="M4.500 1.500h19a3 3 0 0 1 3 3V12a12.500 12.500 0 0 1-25 0V4.500a3 3 0 0 1 3-3z" />
        <path d="M8 9.500l6 6 6-6" />
      </svg>
      <svg viewBox="0 0 30 30" className="ml-[44px] size-[30px]">
        <circle cx="15" cy="15" r="13.500" fill="none" stroke="#5b5b66" strokeWidth="2.700" />
        <circle cx="15" cy="11.500" r="5" fill="#5b5b66" />
        <path d="M6.500 18.500h17a9.500 7 0 0 1-17 0z" fill="#5b5b66" />
      </svg>
      <svg viewBox="0 0 28 32" className="ml-[43px] h-[32px] w-[28px]" fill="none" stroke="#5b5b66" strokeWidth="2.700" strokeLinejoin="round">
        <path d="M9.500 10V5a3.500 3.500 0 0 1 7 0v5h7a3 3 0 0 1 3 3v14.500a3 3 0 0 1-3 3H1.500v-8H5a4 4 0 0 0 0-8H1.500V13a3 3 0 0 1 3-3z" />
      </svg>
      <div className="ml-[44px] flex h-[20px] w-[25px] flex-col justify-between">
        <div className="h-[2.500px] bg-[#5b5b66]" />
        <div className="h-[2.500px] bg-[#5b5b66]" />
        <div className="h-[2.500px] bg-[#5b5b66]" />
      </div>
    </div>
  );
}

/* ---------- emoji drawings ---------- */
const emojiBox = "inline-block size-[38px] align-[-6px]";
const SunFace = () => (
  <svg viewBox="0 0 38 38" className={emojiBox}>
    <circle cx="19.500" cy="19" r="16.800" fill="none" stroke="#f3ba45" strokeWidth="3" strokeDasharray="2.600 1.800" />
    <circle cx="19.500" cy="19" r="15.300" fill="url(#sun)" />
    <path d="M14 15v2.600M25 15v2.600" stroke="#5b3416" strokeWidth="2.400" strokeLinecap="round" />
    <path d="M11 12c1-1 4-1.500 5-.5M23 11.500c1-1 4-.5 5 .5M19.500 17v5l-1.500 1M15.500 26c2.500 1.500 5.500 1.500 8 0" stroke="#c98a30" strokeWidth="1.300" fill="none" strokeLinecap="round" />
  </svg>
);
const Student = () => (
  <svg viewBox="0 0 38 38" className={emojiBox}>
    <path d="M6 37c0-6 5-8.500 9-9h10c4 .5 9 3 9 9z" fill="#3b3b3d" />
    <path d="M15.500 26h9v4L20 35l-4.500-5z" fill="#f0b429" />
    <ellipse cx="20" cy="19" rx="9.800" ry="10.500" fill="#fcc93d" />
    <path d="M10.500 9h19l.5 5H10z" fill="#2c2c2e" />
    <path d="M20 1L35 5.500 20 10.500 5 5.500z" fill="#454548" />
    <path d="M7 6v13" stroke="#b07c2a" strokeWidth="1.800" />
    <path d="M16 17.500v1.800M24 17.500v1.800" stroke="#4b2f12" strokeWidth="2.200" strokeLinecap="round" />
    <path d="M17 24.500c2 1 4 1 6 0" stroke="#9c5a1a" strokeWidth="1.400" fill="none" />
  </svg>
);
const Teacher = () => (
  <svg viewBox="0 0 38 38" className={emojiBox}>
    <rect x="1" y="6" width="36" height="26" fill="#9b7352" />
    <rect x="3" y="8" width="32" height="22" fill="#33604c" />
    <path d="M6 37c0-5 5-7.500 9-8h8c4 .5 9 3 9 8z" fill="#b9bdc2" />
    <path d="M14 32h10v5H14z" fill="#cf3b36" />
    <ellipse cx="19" cy="17" rx="9" ry="11.500" fill="#fcc93d" />
    <path d="M9 15C8 6 13 1 20 1.500 27 2 30 8 29 14c-3-1-7-3-9-6-2 4-7 5-11 7z" fill="#f3d571" />
    <circle cx="15" cy="17.500" r="3" fill="none" stroke="#3f3424" strokeWidth="1.100" />
    <circle cx="23" cy="17.500" r="3" fill="none" stroke="#3f3424" strokeWidth="1.100" />
    <path d="M16 24c2 1 4 1 6 0" stroke="#9c5a1a" strokeWidth="1.400" fill="none" />
  </svg>
);
const Burger = () => (
  <svg viewBox="0 0 38 38" className={emojiBox}>
    <path d="M2 28h34c0 6-3 8-7 8H9c-4 0-7-2-7-8z" fill="#d98a3e" />
    <path d="M1.500 24c3 3 5 5 8 3s4 3 8 1 5 3 9 0 6 0 10-4z" fill="#7fbf3a" />
    <rect x="2" y="20.500" width="34" height="6" rx="3" fill="#5a2f1a" />
    <path d="M3 19h32l-9 2-7 6-7-6z" fill="#f8c530" />
    <rect x="2.500" y="16.500" width="33" height="3.500" rx="1.700" fill="#df4a35" />
    <path d="M2 17C2 7 9 2 19 2s17 5 17 15z" fill="#e39a50" />
    <path d="M9 9c3-3 6-4 10-4" stroke="#f5c78b" strokeWidth="2.500" fill="none" strokeLinecap="round" />
  </svg>
);
const Megaphone = () => (
  <svg viewBox="0 0 60 52" className="-mt-[6px] h-[52px] w-[60px]">
    <path d="M28 42c0 10 14 11 14 1" stroke="#a07a14" strokeWidth="3.500" fill="none" />
    <path d="M11 2C22 10 44 22 56 24c3 3 3 12 0 15-14 1-36 3-51 9C-1 36 3 10 11 2z" fill="url(#brass)" />
    <path d="M16 8c14 9 26 15 39 18" stroke="#e8d56a" strokeWidth="2" fill="none" />
    <ellipse cx="8.500" cy="25" rx="6.500" ry="23.500" transform="rotate(8 8.500 25)" fill="#b8861c" stroke="#d9b63a" strokeWidth="2" />
    <ellipse cx="8.500" cy="26" rx="3.500" ry="17" transform="rotate(8 8.500 26)" fill="#8a4a14" />
    <ellipse cx="56.500" cy="31.500" rx="3" ry="8.500" fill="#d9b63a" stroke="#8d6b10" />
  </svg>
);

/* ---------- page ---------- */
const schedule: { time: string; title: React.ReactNode }[] = [
  { time: "9:00am - 9:45am", title: <>Morning Opening <SunFace /> - Mastering basic operations (Mac OS)</> },
  { time: "9:45am - 11:30am", title: <>Self Study <Student /></> },
  { time: "11:30am - 1:00pm", title: <>Recap / Python #2 - Variables &amp; Functions <Teacher /></> },
  { time: "1:00pm - 2:30pm", title: <>Lunch Break <Burger /></> },
  { time: "2:30pm - 6:00pm", title: <>Self Study <Student /></> },
];

function Calendar() {
  return (
    <div className="mt-[14px] font-['Open_Sans'] text-[#222]">
      <div className="flex h-[91px] items-center justify-between">
        <div className="ml-[2px] flex h-full gap-[2px]">
          {["M15 2L3 15l12 13", "M3 2l12 13L3 28"].map((d, i) => (
            <div key={d} className={i === 0 ? "flex w-[102px] items-center justify-center rounded-l-[6px] bg-[#459a59]" : "flex w-[103px] items-center justify-center rounded-r-[6px] bg-[#459a59]"}>
              <svg viewBox="0 0 18 30" className="ml-[2px] mt-[8px] h-[30px] w-[18px]">
                <path d={d} fill="none" stroke="#e2fbd6" strokeWidth="3.600" strokeLinecap="round" strokeLinejoin="round" />
              </svg>
            </div>
          ))}
        </div>
        <div className="whitespace-nowrap text-[67.200px] font-bold leading-none text-[#111]">May 13, 2024</div>
      </div>
      <div className="mt-[59px] border-2 border-[#dddddd] pb-[0.800px] text-[38.400px] leading-[54px]">
        <div className="flex h-[92.600px] items-center bg-[#f0f0f0] pb-[1px] pl-[33.500px] font-bold">Monday</div>
        {schedule.map((s) => (
          <div key={s.time} className="flex border-t-2 border-[#dddddd] py-[19.200px] pl-[33.500px]">
            <div className="w-[389.500px] shrink-0 whitespace-nowrap">{s.time}</div>
            <div className="mt-[18px] size-[24px] shrink-0 rounded-full bg-[#4fae42]" />
            <div className="ml-[33px] max-h-[108px] w-[760px]">{s.title}</div>
          </div>
        ))}
      </div>
      <div className="ml-auto mr-[2px] mt-[59px] flex h-[91px] w-[225px] items-center justify-center rounded-[6px] bg-[#459a59] pb-[5px] text-[36px] text-[#e2fbd6]">Subscribe</div>
    </div>
  );
}

function Page() {
  return (
    <div className="relative h-[1474px] overflow-hidden px-[260px] font-['Inter'] text-[#37352f]">
      <div className="absolute left-[260px] top-[-275px] size-[298px] rounded-full bg-[#0b0b0b]" />
      <h1 className="-ml-[2px] mt-[107px] whitespace-nowrap text-[93px] font-bold leading-[118px] tracking-[-2.550px]">Software Engineering Homepage - May 24</h1>
      <div className="mt-[53px] flex h-[138px] items-center rounded-[8px] border-2 border-[#e5eae9] bg-[#f6faf9] pl-[44px] text-[37.300px] tracking-[-0.300px]">
        <svg viewBox="0 0 40 40" className="-mt-[6px] size-[41px]">
          <circle cx="20" cy="20" r="20" fill="#55534e" />
          <path d="M8 20h22M20.500 9.500L31 20 20.500 30.500" fill="none" stroke="#f6faf9" strokeWidth="4.600" />
        </svg>
        <div className="ml-[35px] whitespace-nowrap pt-[2px]"><span className="font-bold tracking-[0.100px]">Our mutual goal</span> - Build a successful career as Software Engineers.</div>
      </div>
      <div className="grid grid-cols-[1025px_1270px] gap-[101px] pt-[127px]">
        <div>
          <div className="flex h-[70px] items-center pl-[5px]">
            <Megaphone />
            <div className="-mt-[1px] ml-[10px] text-[56px] font-bold leading-[70px] tracking-[-1.750px]">Announcements</div>
          </div>
          <div className="mt-[96px] flex h-[139px] items-center rounded-[8px] border-2 border-[#eeebe5] bg-[#fefbf4] pl-[41px] text-[37.300px] tracking-[-0.220px]">
            <svg viewBox="0 0 46 28" className="-mt-[5px] h-[28px] w-[46px]" fill="#55534e">
              <rect width="31" height="28" rx="6" />
              <path d="M34 11l8-7.500c2-1.500 4-1 4 1.500v18c0 2.500-2 3-4 1.500L34 17z" />
            </svg>
            <div className="ml-[32px] whitespace-nowrap pt-[2px]">
              All sessions Zoom link - <span className="border-b-2 border-[#c9c6c0] text-[#7a7873]">Click here</span>
            </div>
          </div>
        </div>
        <Calendar />
      </div>
    </div>
  );
}

export default function App() {
  return (
    <div className="relative h-[1912px] w-[2940px] overflow-hidden bg-[radial-gradient(circle_at_0px_1780px,#0a4054_0px,#041c28_90px,#000_220px)]">
      <Defs />
      {/* desktop wallpaper visible around the dock */}
      <div className="absolute bottom-0 left-0 h-[10px] w-full bg-[linear-gradient(90deg,transparent_530px,#a4d6da_538px,#a4d6da_550px,#0a1420_552px,#020303_700px,#02100c_1480px,#35584a_1488px,#35584a_1498px,#dfe6e4_1500px,#8bd8bc_1600px,#4b9a7c_1750px,#1d4a34_1950px,#122c1e_2200px,#020303_2480px)]" />
      <div className="absolute left-0 top-[1774px] h-[4px] w-full bg-[linear-gradient(90deg,transparent_530px,#5f8a8c_540px,#5f8a8c_550px,#050808_552px,#050808_590px,#6b5f5c_592px,#050808_800px,#050808_1040px,#4c4f4c_1046px,#1f4852_1120px,#020303_1200px,#020303_1498px,#747a78_1500px,#2a5a48_1700px,#020303_2100px)]" />
      <div className="absolute left-0 top-[72px] h-[2px] w-full bg-[linear-gradient(90deg,#000_590px,#6cb4bc_592px,#0a1430_720px,#000_760px,#000_1040px,#8d9a96_1046px,#6cae9e_1250px,#3a5a66_1450px,#0a2a34_1700px,#000_2000px)]" />
      {/* Slack window peeking out below the browser */}
      <div className="absolute left-0 top-[1600px] h-[174px] w-[2940px] overflow-hidden rounded-b-[22px] border-b border-[#5a2a58] bg-[#290e2b]">
        <div className="ml-[140px] flex h-[166px] w-[2791px] overflow-hidden rounded-b-[14px]">
          <div className="w-[668px] bg-[#301a32]" />
          <div className="flex-1 bg-[linear-gradient(90deg,#a2a2a2_95%,#cccccc)]" />
        </div>
      </div>

      <MenuBar />
      <div className="relative mt-[2px] h-[1678px] overflow-hidden rounded-[20px] bg-white">
        <TabStrip />
        <Toolbar />
        <Page />
        <div className="pointer-events-none absolute bottom-0 left-0 h-[64px] w-full bg-[linear-gradient(180deg,rgba(0,0,0,0),rgba(0,0,0,0.07))] [mask-image:linear-gradient(90deg,transparent,#000_8%,#000_94%,transparent)]" />
        <div className="absolute bottom-[48px] right-[48px] flex size-[115px] items-center justify-center rounded-full bg-[#212121] shadow-[0_4px_50px_rgba(0,0,0,0.22)]">
          <svg viewBox="0 0 51 57" className="h-[57px] w-[51px]">
            <path d="M6 0h39a6 6 0 0 1 6 6v51L37 51H6a6 6 0 0 1-6-6V6a6 6 0 0 1 6-6z" fill="#fff" />
            <path d="M8 37.500c10 7.500 25 7.500 35 0" fill="none" stroke="#212121" strokeWidth="3.200" strokeLinecap="round" />
          </svg>
        </div>
      </div>
      <Dock />
    </div>
  );
}
